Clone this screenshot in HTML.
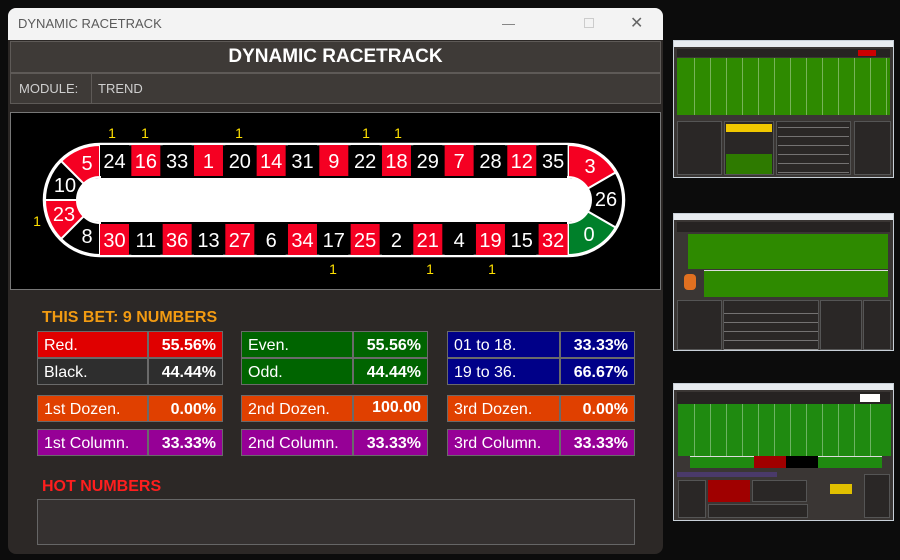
<!DOCTYPE html>
<html><head><meta charset="utf-8">
<style>
*{margin:0;padding:0;box-sizing:border-box}
body{width:900px;height:560px;background:#0c0c0c;position:relative;overflow:hidden;font-family:"Liberation Sans",sans-serif}
.abs{position:absolute}
.win{left:8px;top:8px;width:655px;height:546px;background:#2c2826;border-radius:8px;overflow:hidden}
.tb{left:0;top:0;width:655px;height:32px;background:#f3f3f3;color:#5a5a5a;font-size:13px;line-height:32px;padding-left:10px}
.hdr{left:2px;top:33px;width:651px;height:32px;background:#3e3a37;border:1px solid #5e5a57;color:#fff;font-weight:bold;font-size:19px;text-align:center;line-height:30px}
.mod{left:2px;top:65px;width:651px;height:31px;background:#3e3a37;border:1px solid #5e5a57;color:#cfcfcf;font-size:13px;line-height:29px}
.cell{position:absolute;height:27px;color:#fff;font-size:16px;line-height:27px;border:1px solid #6a6a6a}
.l{padding-left:6px}
.r{text-align:right;padding-right:6px;font-weight:bold}
.th{position:absolute;border:1px solid #c8d0d8;background:#3a3634}
.tt{position:absolute;left:0;top:0;width:100%;height:6px;background:#e8ecf0}
.gl{position:absolute;background:repeating-linear-gradient(90deg,rgba(255,255,255,.35) 0 1px,transparent 1px 16px)}
.gh{position:absolute;background:repeating-linear-gradient(0deg,rgba(255,255,255,.35) 0 1px,transparent 1px 9px)}
</style></head><body>
<div class="abs win">
 <div class="abs tb">DYNAMIC RACETRACK
  <span class="abs" style="left:494px;top:0;color:#777">—</span>
  <span class="abs" style="left:576px;top:10px;width:10px;height:10px;border:1px solid #ccc"></span>
  <span class="abs" style="left:622px;top:0;font-size:16px;color:#666">✕</span>
 </div>
 <div class="abs hdr">DYNAMIC RACETRACK</div>
 <div class="abs mod"><span class="abs" style="left:8px">MODULE:</span><span class="abs" style="left:80px;top:0;height:29px;border-left:1px solid #5e5a57"></span><span class="abs" style="left:87px">TREND</span></div>
 <div class="abs" style="left:2px;top:104px;width:651px;height:178px;background:#000;border:1px solid #777"></div>
</div>

<svg class="abs" style="left:0;top:0" width="900" height="560" font-family="Liberation Sans,sans-serif">
 <path d="M100 144 H568 A56 56 0 0 1 568 256 H100 A56 56 0 0 1 100 144Z" fill="#000" stroke="#fff" stroke-width="2.5"/>
 <g stroke="#fff" stroke-width="2">
 <path d="M100 145 L100 177 A23 23 0 0 0 83.7 183.7 L61.1 161.1 A55 55 0 0 1 100 145Z" fill="#f50022"/>
 <path d="M61.1 161.1 L83.7 183.7 A23 23 0 0 0 77 200 L45 200 A55 55 0 0 1 61.1 161.1Z" fill="#000"/>
 <path d="M45 200 L77 200 A23 23 0 0 0 83.7 216.3 L61.1 238.9 A55 55 0 0 1 45 200Z" fill="#f50022"/>
 <path d="M61.1 238.9 L83.7 216.3 A23 23 0 0 0 100 223 L100 255 A55 55 0 0 1 61.1 238.9Z" fill="#000"/>
 <path d="M568 145 A55 55 0 0 1 615.6 172.5 L587.9 188.5 A23 23 0 0 0 568 177Z" fill="#f50022"/>
 <path d="M615.6 172.5 A55 55 0 0 1 615.6 227.5 L587.9 211.5 A23 23 0 0 0 587.9 188.5Z" fill="#000"/>
 <path d="M615.6 227.5 A55 55 0 0 1 568 255 L568 223 A23 23 0 0 0 587.9 211.5Z" fill="#00802a"/>
 </g>
 <rect x="77" y="178" width="514" height="44" rx="22" fill="#fff"/>
 <g font-size="20" fill="#fff" text-anchor="middle" dominant-baseline="central">
 <text x="87" y="164">5</text><text x="65" y="186">10</text><text x="64" y="215">23</text><text x="87" y="237">8</text>
 <text x="590" y="167">3</text><text x="606" y="200">26</text><text x="589" y="235">0</text>
 </g>
 <g id="cells" font-size="20" fill="#fff" text-anchor="middle">
 </g>
 <g font-size="14" fill="#ffe000" text-anchor="middle">
 <text x="112" y="138">1</text><text x="145" y="138">1</text><text x="239" y="138">1</text><text x="366" y="138">1</text><text x="398" y="138">1</text>
 <text x="333" y="274">1</text><text x="430" y="274">1</text><text x="492" y="274">1</text><text x="37" y="226">1</text>
 </g>
</svg>

<div class="abs" style="left:42px;top:309px;color:#f29b12;font-size:16px;font-weight:bold">THIS BET: 9 NUMBERS</div>

<div class="cell l" style="left:37px;top:331px;width:111px;background:#e00000">Red.</div><div class="cell r" style="left:148px;top:331px;width:75px;background:#e00000">55.56%</div>
<div class="cell l" style="left:37px;top:358px;width:111px;background:#2e2e2e">Black.</div><div class="cell r" style="left:148px;top:358px;width:75px;background:#2e2e2e">44.44%</div>
<div class="cell l" style="left:241px;top:331px;width:112px;background:#006400">Even.</div><div class="cell r" style="left:353px;top:331px;width:75px;background:#006400">55.56%</div>
<div class="cell l" style="left:241px;top:358px;width:112px;background:#006400">Odd.</div><div class="cell r" style="left:353px;top:358px;width:75px;background:#006400">44.44%</div>
<div class="cell l" style="left:447px;top:331px;width:113px;background:#000088">01 to 18.</div><div class="cell r" style="left:560px;top:331px;width:75px;background:#000088">33.33%</div>
<div class="cell l" style="left:447px;top:358px;width:113px;background:#000088">19 to 36.</div><div class="cell r" style="left:560px;top:358px;width:75px;background:#000088">66.67%</div>

<div class="cell l" style="left:37px;top:395px;width:111px;background:#e04000">1st Dozen.</div><div class="cell r" style="left:148px;top:395px;width:75px;background:#e04000">0.00%</div>
<div class="cell l" style="left:241px;top:395px;width:112px;background:#e04000">2nd Dozen.</div><div class="cell r" style="left:353px;top:395px;width:75px;background:#e04000;line-height:24px">100.00</div>
<div class="cell l" style="left:447px;top:395px;width:113px;background:#e04000">3rd Dozen.</div><div class="cell r" style="left:560px;top:395px;width:75px;background:#e04000">0.00%</div>

<div class="cell l" style="left:37px;top:429px;width:111px;background:#960096">1st Column.</div><div class="cell r" style="left:148px;top:429px;width:75px;background:#960096">33.33%</div>
<div class="cell l" style="left:241px;top:429px;width:112px;background:#960096">2nd Column.</div><div class="cell r" style="left:353px;top:429px;width:75px;background:#960096">33.33%</div>
<div class="cell l" style="left:447px;top:429px;width:113px;background:#960096">3rd Column.</div><div class="cell r" style="left:560px;top:429px;width:75px;background:#960096">33.33%</div>

<div class="abs" style="left:42px;top:478px;color:#ff1e1e;font-size:16px;font-weight:bold">HOT NUMBERS</div>
<div class="abs" style="left:37px;top:499px;width:598px;height:46px;border:1px solid #666;background:#353130"></div>

<!-- thumbnails -->
<div class="th" style="left:673px;top:40px;width:221px;height:138px">
 <div class="tt"></div>
 <div class="abs" style="left:3px;top:8px;width:213px;height:8px;background:#262322"></div>
 <div class="abs" style="left:184px;top:9px;width:18px;height:6px;background:#c00"></div>
 <div class="abs" style="left:3px;top:17px;width:213px;height:57px;background:#2e8a00"></div>
 <div class="gl" style="left:20px;top:17px;width:196px;height:57px"></div>
 <div class="abs" style="left:3px;top:80px;width:45px;height:54px;background:#2a2726;border:1px solid #555"></div>
 <div class="abs" style="left:50px;top:80px;width:50px;height:54px;background:#2a2726;border:1px solid #555"></div>
 <div class="abs" style="left:52px;top:83px;width:46px;height:8px;background:#f0c800"></div>
 <div class="abs" style="left:52px;top:113px;width:46px;height:20px;background:#2e7a00"></div>
 <div class="abs" style="left:102px;top:80px;width:75px;height:54px;background:#2a2726;border:1px solid #555"></div>
 <div class="gh" style="left:104px;top:86px;width:71px;height:46px"></div>
 <div class="abs" style="left:180px;top:80px;width:37px;height:54px;background:#2a2726;border:1px solid #555"></div>
</div>
<div class="th" style="left:673px;top:213px;width:221px;height:138px">
 <div class="tt"></div>
 <div class="abs" style="left:3px;top:8px;width:213px;height:10px;background:#262322"></div>
 <div class="abs" style="left:30px;top:20px;width:184px;height:35px;background:#2e8a00"></div>
 <div class="abs" style="left:14px;top:20px;width:18px;height:35px;background:#2e8a00"></div>
 <div class="abs" style="left:30px;top:56px;width:184px;height:27px;background:#2e8a00;border-top:1px solid #ddd"></div>
 <div class="abs" style="left:10px;top:60px;width:12px;height:16px;background:#e07020;border-radius:4px"></div>
 <div class="abs" style="left:3px;top:86px;width:45px;height:50px;background:#2a2726;border:1px solid #555"></div>
 <div class="abs" style="left:49px;top:86px;width:96px;height:50px;background:#2a2726;border:1px solid #555"></div>
 <div class="gh" style="left:50px;top:92px;width:94px;height:44px"></div>
 <div class="abs" style="left:146px;top:86px;width:42px;height:50px;background:#2a2726;border:1px solid #555"></div>
 <div class="abs" style="left:189px;top:86px;width:28px;height:50px;background:#2a2726;border:1px solid #555"></div>
</div>
<div class="th" style="left:673px;top:383px;width:221px;height:138px">
 <div class="tt"></div>
 <div class="abs" style="left:3px;top:8px;width:213px;height:12px;background:#262322"></div>
 <div class="abs" style="left:186px;top:10px;width:20px;height:8px;background:#fff"></div>
 <div class="abs" style="left:4px;top:20px;width:213px;height:52px;background:#1f8a10"></div>
 <div class="gl" style="left:20px;top:20px;width:188px;height:52px"></div>
 <div class="abs" style="left:16px;top:72px;width:192px;height:12px;background:#1f8a10;border-top:1px solid #ddd"></div>
 <div class="abs" style="left:80px;top:72px;width:32px;height:12px;background:#a00000"></div>
 <div class="abs" style="left:112px;top:72px;width:32px;height:12px;background:#000"></div>
 <div class="abs" style="left:3px;top:88px;width:100px;height:5px;background:#4a3a6a"></div>
 <div class="abs" style="left:34px;top:96px;width:42px;height:22px;background:#a00000"></div>
 <div class="abs" style="left:4px;top:96px;width:28px;height:38px;background:#2a2726;border:1px solid #555"></div>
 <div class="abs" style="left:78px;top:96px;width:55px;height:22px;background:#2a2726;border:1px solid #555"></div>
 <div class="abs" style="left:34px;top:120px;width:100px;height:14px;background:#2a2726;border:1px solid #555"></div>
 <div class="abs" style="left:156px;top:100px;width:22px;height:10px;background:#e0c000"></div>
 <div class="abs" style="left:190px;top:90px;width:26px;height:44px;background:#2a2726;border:1px solid #555"></div>
</div>

<script>
var top1=[24,16,33,1,20,14,31,9,22,18,29,7,28,12,35],bot=[30,11,36,13,27,6,34,17,25,2,21,4,19,15,32];
var red=[1,3,5,7,9,12,14,16,18,19,21,23,25,27,30,32,34,36];
var g=document.getElementById('cells'),s='';
function c(n,x,y){var col=red.indexOf(n)>=0?'#f50022':'#000';
 s+='<rect x="'+x+'" y="'+y+'" width="29" height="31" fill="'+col+'"/><text x="'+(x+14.5)+'" y="'+(y+23)+'">'+n+'</text>';}
for(var i=0;i<15;i++){var x=100+31.33*i;c(top1[i],x,145);c(bot[i],x,224);}
g.innerHTML=s;
</script>
</body></html>
